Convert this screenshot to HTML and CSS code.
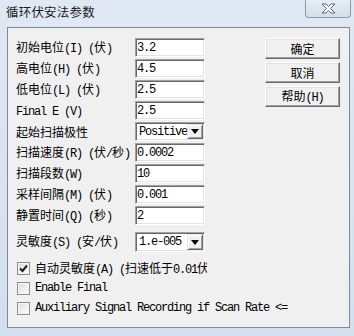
FILE: index.html
```html
<!DOCTYPE html>
<html lang="zh-CN">
<head>
    <meta charset="UTF-8">
    <title>循环伏安法参数</title>
    <link rel="stylesheet" href="styles.css">
</head>
<body>

    <div class="window">
        <div class="titlebar">
            <span class="title">循环伏安法参数</span>
            <div class="close">
                <svg width="15" height="11" viewBox="0 0 15 11">
                    <path d="M1 1h4l2.5 2.5L10 1h4l-4.5 4.5L14 10h-4L7.5 7.5 5 10H1l4.5-4.5z" fill="#fff" stroke="#56627a" stroke-width="1" stroke-linejoin="round"/>
                </svg>
            </div>
        </div>

        <div class="client">
            <div class="top">
                <div class="form">
                    <div class="row">
                        <label class="lbl">初始电位<span class="en">(I) (</span>伏<span class="en">)</span></label>
                        <input class="field en" value="3.2">
                    </div>
                    <div class="row">
                        <label class="lbl">高电位<span class="en">(H) (</span>伏<span class="en">)</span></label>
                        <input class="field en" value="4.5">
                    </div>
                    <div class="row">
                        <label class="lbl">低电位<span class="en">(L) (</span>伏<span class="en">)</span></label>
                        <input class="field en" value="2.5">
                    </div>
                    <div class="row">
                        <label class="lbl"><span class="en">Final E (V)</span></label>
                        <input class="field en" value="2.5">
                    </div>
                    <div class="row">
                        <label class="lbl">起始扫描极性</label>
                        <div class="combo">
                            <span class="combo-text en">Positive</span>
                            <span class="drop"><svg width="8" height="5" viewBox="0 0 8 5"><path d="M0 0h8L4 5z" fill="#000"/></svg></span>
                        </div>
                    </div>
                    <div class="row">
                        <label class="lbl">扫描速度<span class="en">(R) (</span>伏<span class="en">/</span>秒<span class="en">)</span></label>
                        <input class="field en" value="0.0002">
                    </div>
                    <div class="row">
                        <label class="lbl">扫描段数<span class="en">(W)</span></label>
                        <input class="field en" value="10">
                    </div>
                    <div class="row">
                        <label class="lbl">采样间隔<span class="en">(M) (</span>伏<span class="en">)</span></label>
                        <input class="field en" value="0.001">
                    </div>
                    <div class="row">
                        <label class="lbl">静置时间<span class="en">(Q) (</span>秒<span class="en">)</span></label>
                        <input class="field en" value="2">
                    </div>
                    <div class="row spaced">
                        <label class="lbl">灵敏度<span class="en">(S) (</span>安<span class="en">/</span>伏<span class="en">)</span></label>
                        <div class="combo tall">
                            <span class="combo-text en">1.e-005</span>
                            <span class="drop"><svg width="8" height="5" viewBox="0 0 8 5"><path d="M0 0h8L4 5z" fill="#000"/></svg></span>
                        </div>
                    </div>
                </div>

                <div class="buttons">
                    <button class="btn">确定</button>
                    <button class="btn">取消</button>
                    <button class="btn">帮助<span class="en">(H)</span></button>
                </div>
            </div>

            <div class="checks">
                <div class="check">
                    <span class="box">
                        <svg width="11" height="11" viewBox="0 0 11 11"><path d="M2 5.5l2.5 2.5L9 2.5" fill="none" stroke="#1c1c1c" stroke-width="2"/></svg>
                    </span>
                    <span class="clip">自动灵敏度<span class="en">(A) (</span>扫速低于<span class="en">0.01</span>伏<span class="en">/</span>秒<span class="en">)</span></span>
                </div>
                <div class="check">
                    <span class="box"></span>
                    <span class="en">Enable Final</span>
                </div>
                <div class="check">
                    <span class="box"></span>
                    <span class="en">Auxiliary Signal Recording if Scan Rate &lt;=</span>
                </div>
            </div>
        </div>
    </div>

</body>
</html>
```

FILE: styles.css
```css
body {
    margin: 0;
    font-family: "Noto Sans CJK SC", sans-serif;
    font-size: 12px;
    color: #000;
}
.en {
    font-family: "Liberation Mono", monospace;
    font-size: 12px;
    letter-spacing: -1.2px;
}
.window {
    width: 354px;
    height: 336px;
    display: flex;
    flex-direction: column;
    background: linear-gradient(#dfe8f3, #d4dfed);
}
.titlebar {
    height: 27px;
    display: flex;
    align-items: flex-start;
    padding-left: 6px;
}
.title {
    padding-top: 4px;
    line-height: 16px;
    font-size: 12.5px;
    letter-spacing: 0.2px;
    color: #1a1a1a;
}
.close {
    margin-left: auto;
    margin-right: 3px;
    width: 46px;
    height: 18px;
    box-sizing: border-box;
    border: 1px solid #8d9bb0;
    border-top: none;
    border-radius: 0 0 4px 4px;
    background: linear-gradient(#e6edf5, #d3ddea);
    display: flex;
    align-items: center;
    justify-content: center;
}
.client {
    flex: 1;
    margin: 0 4px 8px 7px;
    border: 1px solid #7d8a9b;
    background: #f0f0f0;
    padding: 10px 9px 0 8px;
}
.top {
    display: flex;
}
.form {
    display: flex;
    flex-direction: column;
    gap: 2px;
}
.row {
    display: flex;
    align-items: center;
}
.row.spaced {
    margin-top: 5px;
}
.lbl {
    width: 119px;
    line-height: 14px;
    white-space: nowrap;
}
.field {
    width: 70px;
    height: 19px;
    box-sizing: border-box;
    margin: 0;
    padding: 0 1px;
    border: 1px solid;
    border-color: #a0a0a0 #ffffff #ffffff #a0a0a0;
    box-shadow: inset 1px 1px 0 #696969, inset -1px -1px 0 #e3e3e3;
    background: #fff;
    outline: none;
    color: #000;
}
.combo {
    width: 70px;
    height: 19px;
    box-sizing: border-box;
    display: flex;
    align-items: center;
    border: 1px solid;
    border-color: #a0a0a0 #ffffff #ffffff #a0a0a0;
    box-shadow: inset 1px 1px 0 #696969, inset -1px -1px 0 #e3e3e3;
    background: #fff;
    padding: 1px;
}
.combo.tall {
    height: 20px;
}
.combo-text {
    flex: 1;
    padding-left: 2px;
    white-space: nowrap;
    overflow: hidden;
}
.drop {
    width: 16px;
    height: 100%;
    flex-shrink: 0;
    box-sizing: border-box;
    display: flex;
    align-items: center;
    justify-content: center;
    background: #f0f0f0;
    border: 1px solid;
    border-color: #e3e3e3 #696969 #696969 #e3e3e3;
    box-shadow: inset 1px 1px 0 #fff, inset -1px -1px 0 #a0a0a0;
}
.buttons {
    margin-left: auto;
    display: flex;
    flex-direction: column;
    gap: 3px;
}
.btn {
    width: 75px;
    height: 21px;
    padding: 0;
    font-family: "Noto Sans CJK SC", sans-serif;
    font-size: 12px;
    line-height: 14px;
    color: #000;
    background: #f0f0f0;
    border: 1px solid;
    border-color: #ffffff #696969 #696969 #ffffff;
    box-shadow: inset -1px -1px 0 #a0a0a0, inset 1px 1px 0 #e3e3e3;
}
.checks {
    margin-top: 6px;
    padding-left: 1px;
    display: flex;
    flex-direction: column;
}
.check {
    height: 20px;
    display: flex;
    align-items: center;
    gap: 5px;
    white-space: nowrap;
}
.box {
    width: 13px;
    height: 13px;
    box-sizing: border-box;
    border: 1px solid #8e8f8f;
    background: linear-gradient(135deg, #dcdcdc, #ffffff);
    box-shadow: inset 0 0 0 1px #f4f4f4;
    display: flex;
    align-items: center;
    justify-content: center;
}
.clip {
    width: 172px;
    overflow: hidden;
}
```
